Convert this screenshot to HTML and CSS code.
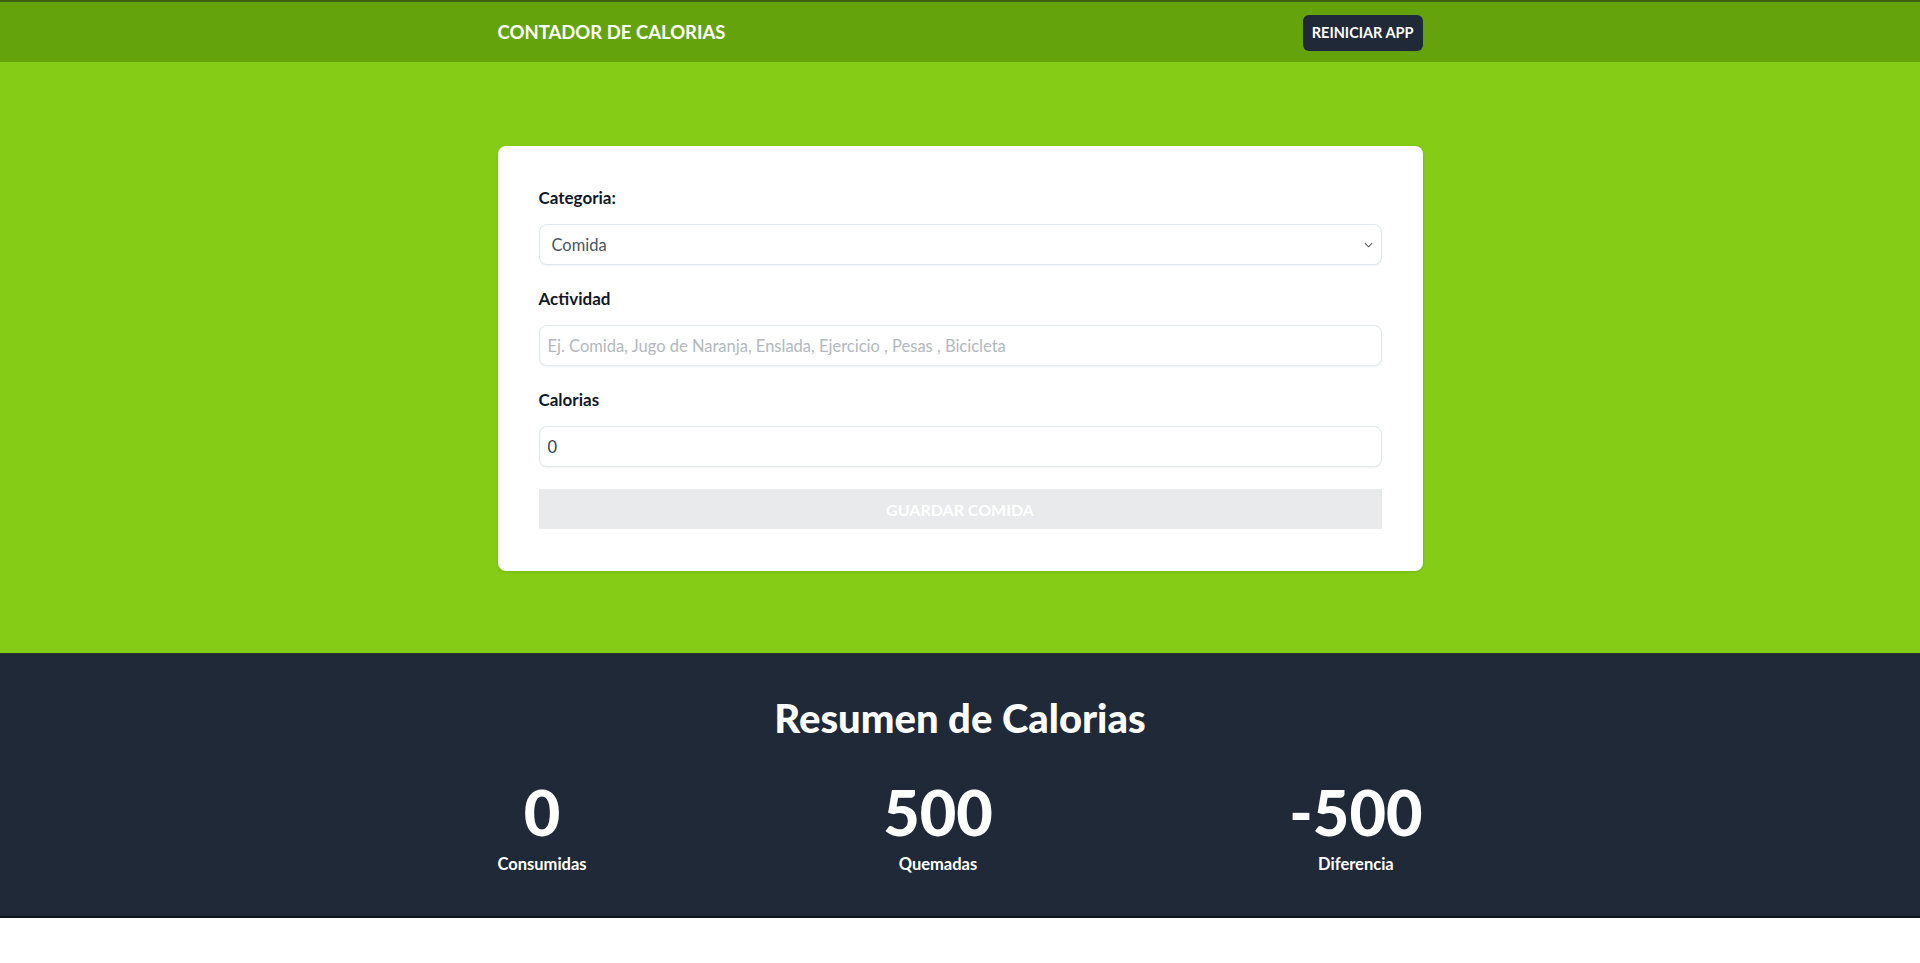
FILE: index.html
```html
<!DOCTYPE html>
<html lang="es">
<head>
<meta charset="UTF-8">
<title>Contador de Calorias</title>
<link rel="stylesheet" href="styles.css">
</head>
<body>
<header class="header">
  <div class="container header-row">
    <h1 class="brand">CONTADOR DE CALORIAS</h1>
    <button class="reset-btn" type="button">REINICIAR APP</button>
  </div>
</header>
<section class="main">
  <div class="container">
    <form class="card">
      <div class="field">
        <label class="label" for="category">Categoria:</label>
        <div class="select-wrap">
          <select id="category" class="control select">
            <option>Comida</option>
            <option>Ejercicio</option>
          </select>
          <svg class="chev" viewBox="0 0 10 6" width="9" height="6"><path d="M1 1l4 4 4-4" fill="none" stroke="#555" stroke-width="1.2"/></svg>
        </div>
      </div>
      <div class="field">
        <label class="label" for="name">Actividad</label>
        <input id="name" class="control" type="text" placeholder="Ej. Comida, Jugo de Naranja, Enslada, Ejercicio , Pesas , Bicicleta">
      </div>
      <div class="field">
        <label class="label" for="calories">Calorias</label>
        <input id="calories" class="control num" type="number" value="0">
      </div>
      <button class="submit" type="button" disabled>GUARDAR COMIDA</button>
    </form>
  </div>
</section>
<section class="summary">
  <div class="container">
    <h2 class="summary-title">Resumen de Calorias</h2>
    <div class="stats">
      <div class="stat"><span class="stat-num">0</span><span class="stat-label">Consumidas</span></div>
      <div class="stat"><span class="stat-num">500</span><span class="stat-label">Quemadas</span></div>
      <div class="stat"><span class="stat-num">-500</span><span class="stat-label">Diferencia</span></div>
    </div>
  </div>
</section>
</body>
</html>
```
FILE: styles.css
```css
* { box-sizing: border-box; }
html, body { margin: 0; padding: 0; }
body {
  font-family: Lato, "Noto Sans", "Liberation Sans", sans-serif;
  background: #ffffff;
  color: #111827;
}
.container {
  width: 925px;
  margin: 0 auto;
}
.header {
  background: #65a30d;
  border-top: 2px solid #3f6212;
  height: 62px;
}
.header-row {
  height: 60px;
  display: flex;
  align-items: center;
  justify-content: space-between;
}
.brand {
  margin: 0;
  color: #ffffff;
  font-size: 18.5px;
  font-weight: 700;
  letter-spacing: 0;
}
.reset-btn {
  background: #1f2937;
  color: #ffffff;
  border: none;
  border-radius: 6px;
  font-family: inherit;
  font-weight: 700;
  font-size: 14.5px;
  height: 36px;
  padding: 0 9px;
  margin-top: 1px;
}
.main {
  background: #84cc16;
  padding: 84px 0 82px;
}
.card {
  background: #ffffff;
  border-radius: 8px;
  box-shadow: 0 1px 3px rgba(0,0,0,0.1);
  padding: 40px 41px 42px;
  display: flex;
  flex-direction: column;
  gap: 22px;
}
.field {
  display: flex;
  flex-direction: column;
  gap: 14px;
}
.label {
  font-weight: 700;
  font-size: 17px;
  line-height: 24px;
  color: #111827;
}
.control {
  width: 100%;
  height: 41px;
  border: 1px solid #e2e8f0;
  border-radius: 8px;
  background: #ffffff;
  font-family: inherit;
  font-size: 16.5px;
  color: #4b5563;
  padding: 0 8px;
  box-shadow: 0 1px 2px rgba(0,0,0,0.06);
  outline: none;
}
.control::placeholder { color: #b3b8c0; }
.num { color: #374151; }
.num::-webkit-inner-spin-button, .num::-webkit-outer-spin-button { -webkit-appearance: none; margin: 0; }
.select-wrap { position: relative; }
.select {
  -webkit-appearance: none;
  appearance: none;
  padding: 0 12px;
}
.chev {
  position: absolute;
  right: 9px;
  top: 18px;
  pointer-events: none;
}
.submit {
  height: 40px;
  border: none;
  background: #e9eaeb;
  color: #ffffff;
  font-family: inherit;
  font-weight: 700;
  font-size: 16px;
  text-transform: uppercase;
}
.summary {
  background: #1f2937;
  border-top: 1px solid #26332a;
  border-bottom: 2px solid #111418;
  padding: 42px 0 40px;
}
.summary-title {
  margin: 0;
  text-align: center;
  color: #ffffff;
  font-size: 40px;
  line-height: 44px;
  font-weight: 900;
}
.stats {
  display: flex;
  justify-content: space-between;
  margin-top: 39px;
}
.stat {
  display: flex;
  flex-direction: column;
  align-items: center;
  color: #ffffff;
}
.stat-num {
  font-size: 63px;
  line-height: 66px;
  font-weight: 900;
}
.stat-label {
  margin-top: 7px;
  font-size: 16.5px;
  line-height: 24px;
  font-weight: 700;
}
```
